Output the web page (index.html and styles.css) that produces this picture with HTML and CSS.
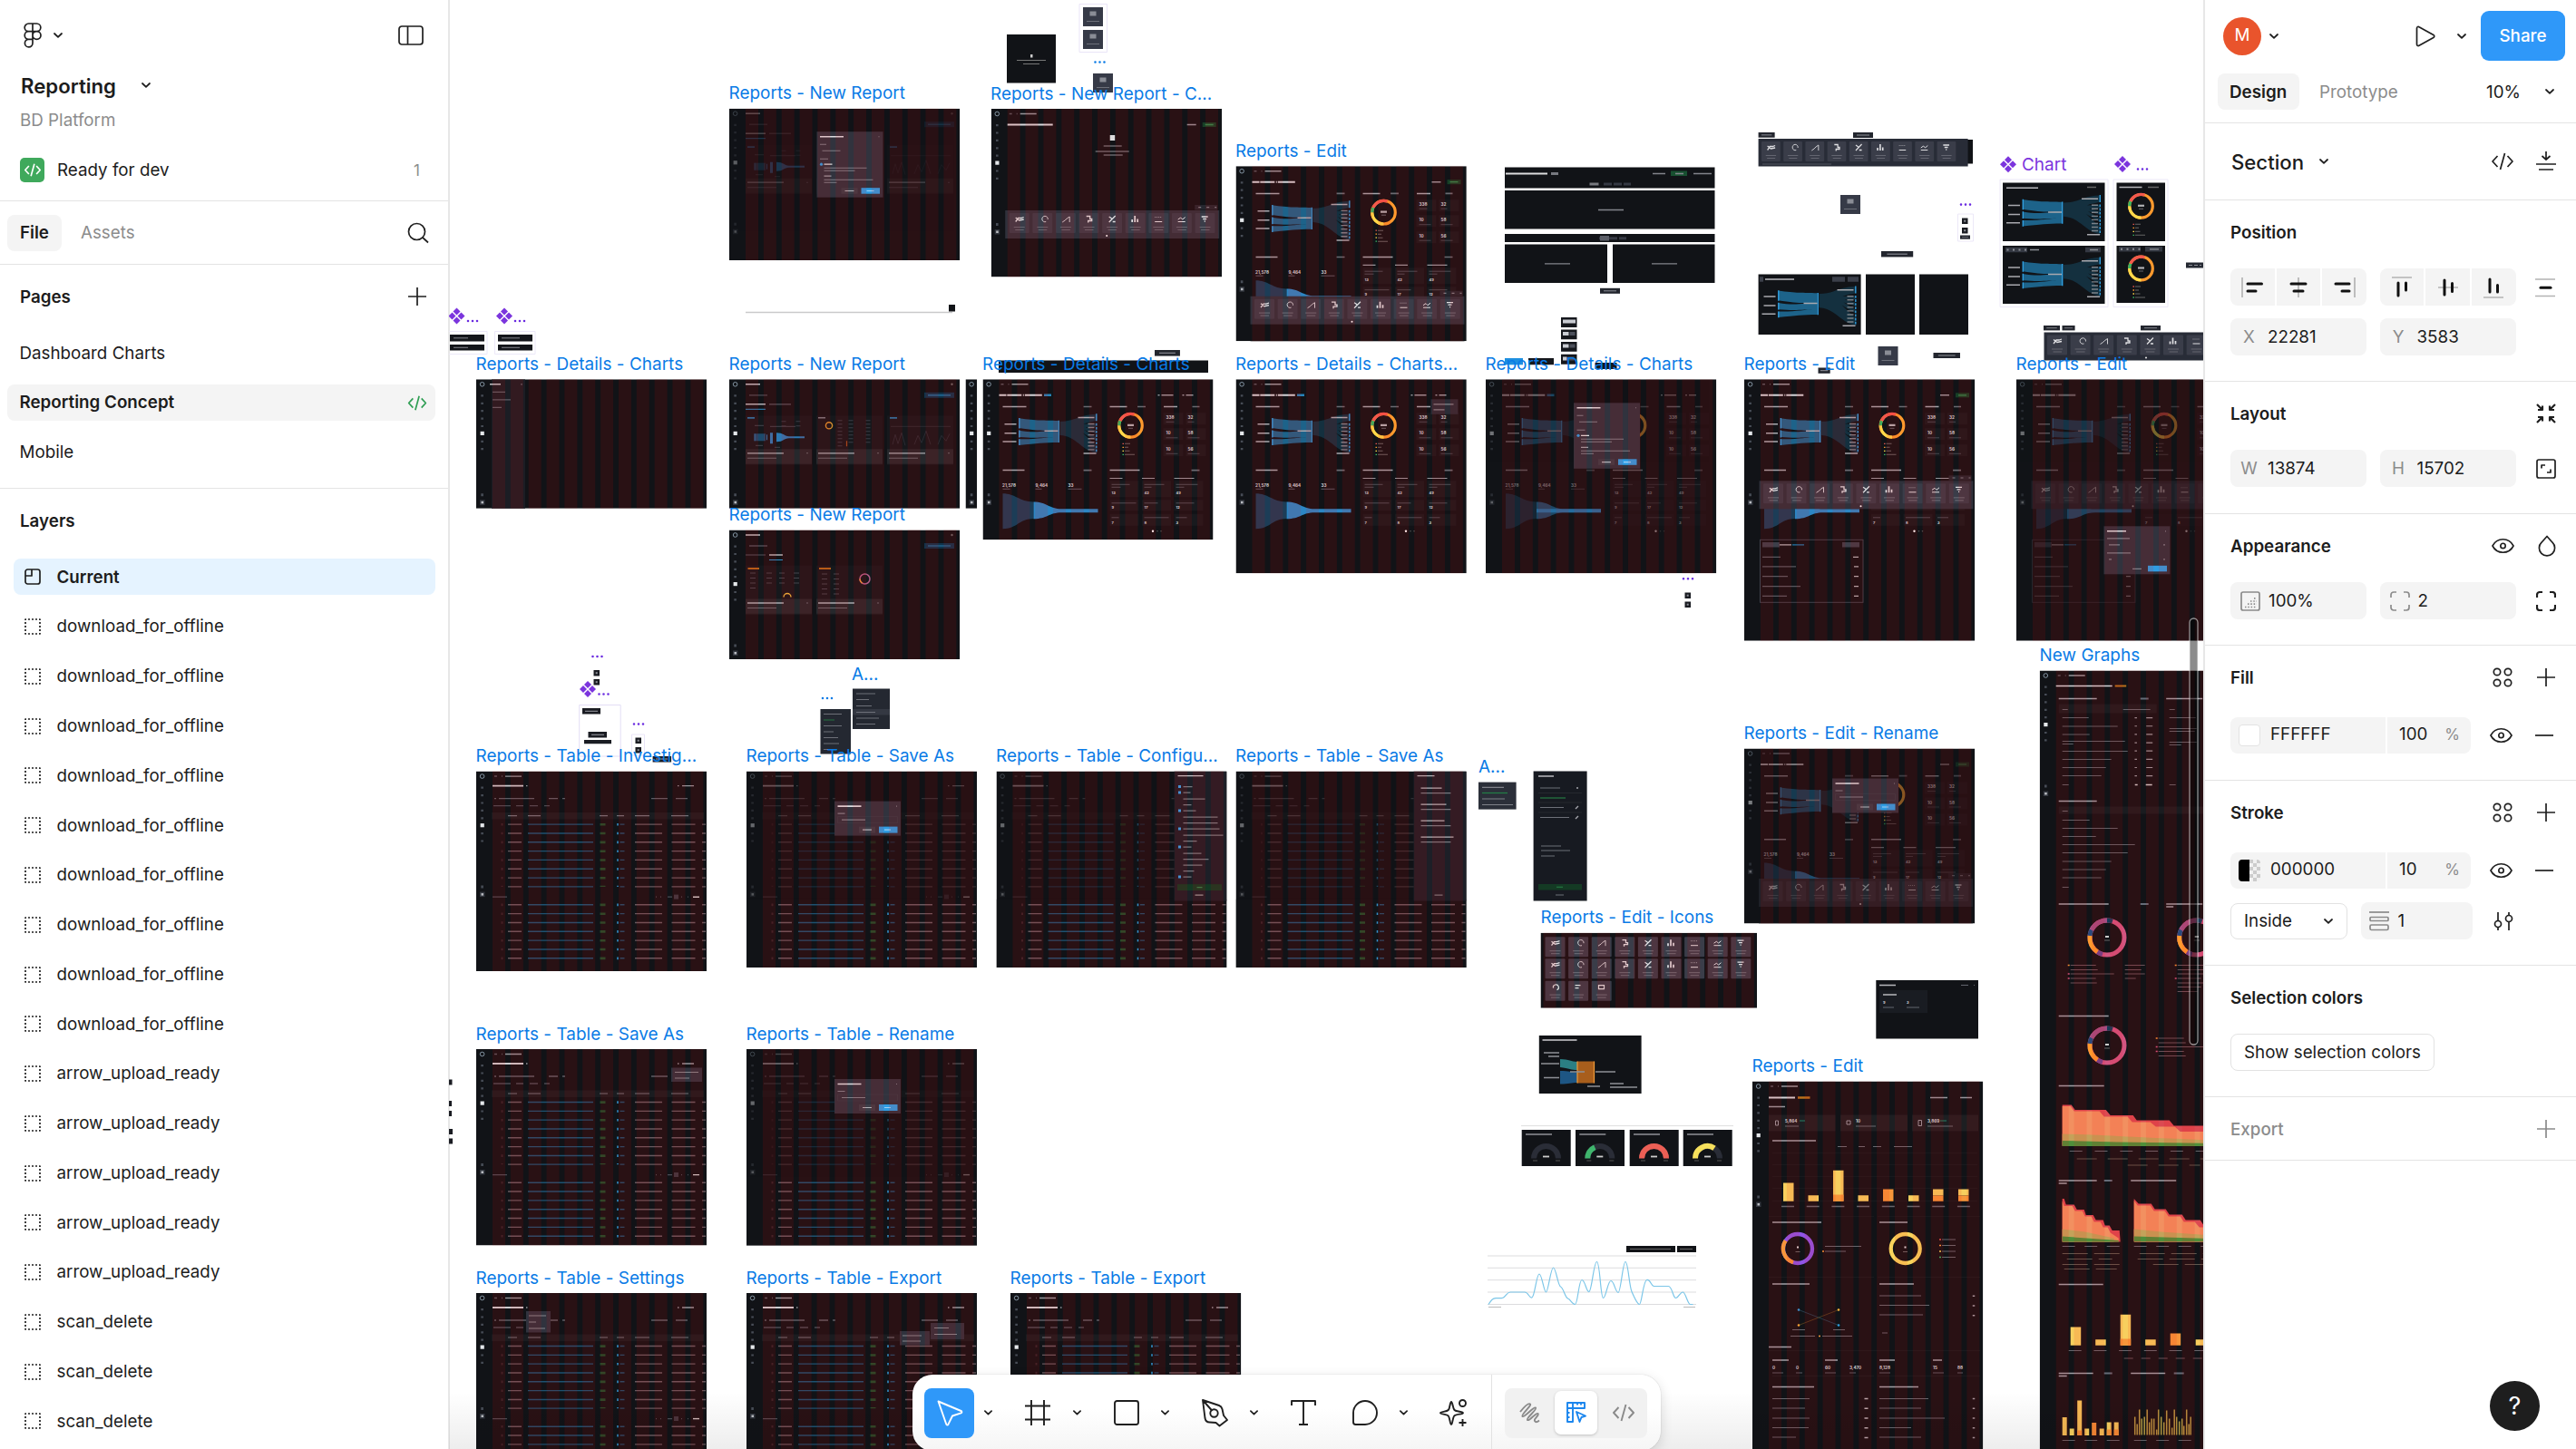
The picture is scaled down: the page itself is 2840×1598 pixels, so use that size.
FILE: index.html
```html
<!DOCTYPE html>
<html lang="en">
<head>
<meta charset="utf-8">
<title>Reporting</title>
<link rel="stylesheet" href="styles.css">
</head>
<body>
<svg class="sprite" aria-hidden="true">
  <defs>
    <symbol id="i-chev" viewBox="0 0 10 6"><path d="M1 1l4 3.800L9 1"/></symbol>
    <symbol id="i-figma" viewBox="0 0 20 28"><path d="M10 1H5.500a4.300 4.300 0 0 0 0 8.700H10zM10 1h4.500a4.300 4.300 0 0 1 0 8.700H10zM10 9.700H5.500a4.300 4.300 0 0 0 0 8.600H10zM10 14a4.500 4.300 0 1 1 9 0a4.500 4.300 0 1 1-9 0zM10 18.300H5.500a4.300 4.300 0 1 0 4.500 4.300z"/></symbol>
    <symbol id="i-panel" viewBox="0 0 28 22"><rect x="1" y="1" width="26" height="20" rx="3"/><path d="M10.500 1v20"/></symbol>
    <symbol id="i-search" viewBox="0 0 24 24"><circle cx="10.500" cy="10.500" r="9"/><path d="M17 17l6 5.500"/></symbol>
    <symbol id="i-plus" viewBox="0 0 22 22"><path d="M11 1v20M1 11h20"/></symbol>
    <symbol id="i-minus" viewBox="0 0 22 22"><path d="M1 11h20"/></symbol>
    <symbol id="i-code" viewBox="0 0 24 20"><path d="M6.500 4L1 10l5.500 6M17.500 4L23 10l-5.500 6M14.500 1l-5 18"/></symbol>
    <symbol id="i-section" viewBox="0 0 18 18"><rect x="1" y="1" width="16" height="16" rx="2.500"/><path d="M1 8h7V1"/></symbol>
    <symbol id="i-group" viewBox="0 0 18 18"><path stroke-dasharray="2 2" stroke-dashoffset="1" d="M1 1h16v16H1z"/></symbol>
    <symbol id="i-play" viewBox="0 0 22 24"><path d="M1.500 3.200v17.600c0 1.500 1.300 2.200 2.500 1.500L19.800 13.600c1.300-.8 1.300-2.400 0-3.200L4 1.700c-1.200-.7-2.500 0-2.500 1.500z"/></symbol>
    <symbol id="i-import" viewBox="0 0 22 22"><path d="M11 0v8.500M6.500 5L11 9l4.500-4M0 14h22M3 20h16"/></symbol>
    <symbol id="i-al" viewBox="0 0 24 24"><path class="faint" d="M1 1v22"/><path class="thick" d="M7 8h15.500M7 16h9"/></symbol>
    <symbol id="i-ac" viewBox="0 0 24 24"><path class="faint" d="M12 1v22"/><path class="thick" d="M4 8h16M7 16h10"/></symbol>
    <symbol id="i-ar" viewBox="0 0 24 24"><path class="faint" d="M23 1v22"/><path class="thick" d="M2 8h15M9 16h8"/></symbol>
    <symbol id="i-at" viewBox="0 0 24 24"><path class="faint" d="M1 1h22"/><path class="thick" d="M8 7v14M16.500 7v8"/></symbol>
    <symbol id="i-am" viewBox="0 0 24 24"><path class="faint" d="M1 12h22"/><path class="thick" d="M8 4v16M16.500 7.500v9"/></symbol>
    <symbol id="i-ab" viewBox="0 0 24 24"><path class="faint" d="M1 23h22"/><path class="thick" d="M8 3v14M16.500 9.500v7.500"/></symbol>
    <symbol id="i-tidy" viewBox="0 0 24 24"><path class="faint" d="M1 3h22M1 21.500h22"/><path class="thick" d="M7 12.300h11"/></symbol>
    <symbol id="i-shrink" viewBox="0 0 22 22"><path d="M1 1l6 6M7 2.500V7H2M21 1l-6 6M15 2.500V7h5M1 21l6-6M7 19.500V15H2M21 21l-6-6M15 19.500V15h5"/></symbol>
    <symbol id="i-resize" viewBox="0 0 22 22"><rect x="1" y="1" width="20" height="20" rx="2"/><path d="M6 10.500V7h4M16 11.500V15h-4"/></symbol>
    <symbol id="i-eye" viewBox="0 0 26 18"><path d="M1 9c2.500-4.800 7-7.500 12-7.500S22.500 4.200 25 9c-2.500 4.800-7 7.500-12 7.500S3.500 13.800 1 9z"/><circle cx="13" cy="9" r="2.800"/></symbol>
    <symbol id="i-drop" viewBox="0 0 20 24"><path d="M10 1.500l6 6.700a8.600 8.600 0 1 1-12 0z"/></symbol>
    <symbol id="i-corners" viewBox="0 0 22 22"><path d="M1 7V4a3 3 0 0 1 3-3h3M15 1h3a3 3 0 0 1 3 3v3M21 15v3a3 3 0 0 1-3 3h-3M7 21H4a3 3 0 0 1-3-3v-3"/></symbol>
    <symbol id="i-opacity" viewBox="0 0 22 22"><rect x="1" y="1" width="20" height="20" rx="2"/><path stroke-dasharray="1.500 1.800" d="M5 17.500h13M8 14.200h10M11 11h7M15 7.800h3"/></symbol>
    <symbol id="i-styles" viewBox="0 0 22 22"><circle cx="5" cy="5" r="3.700"/><circle cx="17" cy="5" r="3.700"/><circle cx="5" cy="17" r="3.700"/><circle cx="17" cy="17" r="3.700"/></symbol>
    <symbol id="i-weight" viewBox="0 0 22 22"><path d="M0 1h22"/><rect x="1" y="6.500" width="20" height="4" rx="1"/><rect x="1" y="15" width="20" height="5.500" rx="1.500"/></symbol>
    <symbol id="i-sliders" viewBox="0 0 22 22"><circle cx="5" cy="14" r="3.500"/><circle cx="17" cy="8" r="3.500"/><path d="M5 1v9.500M5 17.500V21M17 1v3.500M17 11.500V21"/></symbol>
    <symbol id="i-move" viewBox="0 0 30 30"><path d="M2.500 2.500l25 10.500c1.200.5 1.200 1.800 0 2.300L18 18.500l-4.500 9.200c-.6 1.100-1.900 1-2.300-.2z"/></symbol>
    <symbol id="i-frame" viewBox="0 0 28 28"><path d="M7 0v28M21 0v28M0 6.500h28M0 21.500h28"/></symbol>
    <symbol id="i-rect" viewBox="0 0 28 28"><rect x="1" y="1" width="26" height="26" rx="2.500"/></symbol>
    <symbol id="i-pen" viewBox="0 0 30 31"><path d="M2 1l18 6c2 .7 3 2 3.500 4l1.500 7 4 5-8.500 6.500-4-3.500-7-.5c-3 0-4.500-2-5-4.500zM2 1l10.500 12"/><circle cx="14.500" cy="15.500" r="4.200"/></symbol>
    <symbol id="i-text" viewBox="0 0 28 28"><path d="M1 6V1h26v5M14 1v26M9 27h10"/></symbol>
    <symbol id="i-bubble" viewBox="0 0 28 28"><path d="M14 1a13 13 0 0 1 0 26H3.500A2.500 2.500 0 0 1 1 24.500V14A13 13 0 0 1 14 1z"/></symbol>
    <symbol id="i-spark" viewBox="0 0 30 30"><path d="M13 3c1.500 0 1.600 7 3.500 9s9.500 1.600 9.500 3.200-8 1.200-9.800 3.300S14.500 28 13 28s-1.400-7.400-3.200-9.500S1 16.700 1 15.200s6.900-1.200 8.800-3.200S11.500 3 13 3zM25.500 22v8M21.500 26h8"/><circle cx="25.500" cy="4.500" r="3.500"/></symbol>
    <symbol id="i-draw" viewBox="0 0 24 24"><path d="M2 11C7 5 11 1 13 2.500S2.500 14 4.500 16 17 4.500 19 6.500 8 18 10 20s9.500-9 11.500-7-5 5.500-3.500 8 3.500.5 5-.5"/></symbol>
    <symbol id="i-design" viewBox="0 0 24 24"><path d="M2 1h19v6H8v15H2zM8 7V1M13 1v2.500M17 1v2.500M2 7h6M2 12h2.500M2 17h2.500M12 11l10 4.500-4.500 1.500-2 5z"/></symbol>
  </defs>
</svg>

<aside class="left">
  <header class="file-head">
    <div class="row app-row">
      <svg class="ic" width="20" height="28"><use href="#i-figma"/></svg>
      <svg class="ic chev" width="10" height="6"><use href="#i-chev"/></svg>
      <svg class="ic end" width="28" height="22"><use href="#i-panel"/></svg>
    </div>
    <div class="row title-row"><h1>Reporting</h1><svg class="ic chev" width="10" height="6"><use href="#i-chev"/></svg></div>
    <div class="row sub-row"><span>BD Platform</span></div>
    <div class="row dev-row">
      <span class="dev-badge"><svg class="ic" width="20" height="15"><use href="#i-code"/></svg></span>
      <span>Ready for dev</span><span class="count end">1</span>
    </div>
  </header>
  <nav class="tabs">
    <span class="pill">File</span><span class="muted">Assets</span>
    <svg class="ic end" width="24" height="24"><use href="#i-search"/></svg>
  </nav>
  <section class="pages">
    <div class="list-head"><h2>Pages</h2><svg class="ic end" width="22" height="22"><use href="#i-plus"/></svg></div>
    <div class="page"><span>Dashboard Charts</span></div>
    <div class="page current"><span>Reporting Concept</span><svg class="ic end" width="22" height="17"><use href="#i-code"/></svg></div>
    <div class="page"><span>Mobile</span></div>
  </section>
  <section class="layers">
    <div class="list-head"><h2>Layers</h2></div>
    <div class="layer selected"><svg class="ic" width="18" height="18"><use href="#i-section"/></svg><span>Current</span></div>
    <div class="layer"><svg class="ic" width="18" height="18"><use href="#i-group"/></svg><span>download_for_offline</span></div>
    <div class="layer"><svg class="ic" width="18" height="18"><use href="#i-group"/></svg><span>download_for_offline</span></div>
    <div class="layer"><svg class="ic" width="18" height="18"><use href="#i-group"/></svg><span>download_for_offline</span></div>
    <div class="layer"><svg class="ic" width="18" height="18"><use href="#i-group"/></svg><span>download_for_offline</span></div>
    <div class="layer"><svg class="ic" width="18" height="18"><use href="#i-group"/></svg><span>download_for_offline</span></div>
    <div class="layer"><svg class="ic" width="18" height="18"><use href="#i-group"/></svg><span>download_for_offline</span></div>
    <div class="layer"><svg class="ic" width="18" height="18"><use href="#i-group"/></svg><span>download_for_offline</span></div>
    <div class="layer"><svg class="ic" width="18" height="18"><use href="#i-group"/></svg><span>download_for_offline</span></div>
    <div class="layer"><svg class="ic" width="18" height="18"><use href="#i-group"/></svg><span>download_for_offline</span></div>
    <div class="layer"><svg class="ic" width="18" height="18"><use href="#i-group"/></svg><span>arrow_upload_ready</span></div>
    <div class="layer"><svg class="ic" width="18" height="18"><use href="#i-group"/></svg><span>arrow_upload_ready</span></div>
    <div class="layer"><svg class="ic" width="18" height="18"><use href="#i-group"/></svg><span>arrow_upload_ready</span></div>
    <div class="layer"><svg class="ic" width="18" height="18"><use href="#i-group"/></svg><span>arrow_upload_ready</span></div>
    <div class="layer"><svg class="ic" width="18" height="18"><use href="#i-group"/></svg><span>arrow_upload_ready</span></div>
    <div class="layer"><svg class="ic" width="18" height="18"><use href="#i-group"/></svg><span>scan_delete</span></div>
    <div class="layer"><svg class="ic" width="18" height="18"><use href="#i-group"/></svg><span>scan_delete</span></div>
    <div class="layer"><svg class="ic" width="18" height="18"><use href="#i-group"/></svg><span>scan_delete</span></div>
  </section>
</aside>

<main class="canvas">
<svg class="board" width="1935" height="1598" viewBox="495 0 1935 1598">
  <defs>
    <!-- twelve-column layout grid -->
    <path id="grid" class="gridcols" d="M18 0H251"/>
    <!-- app side navigation -->
    <g id="nav">
      <circle cx="6.600" cy="5.500" r="2.300" fill="none" stroke="#9fb4c4" stroke-width=".8"/>
      <path d="M6.600 17v62" stroke="#474c56" stroke-width="2.600" stroke-dasharray="2.200 6.200"/>
      <path d="M6.600 126v3" stroke="#474c56" stroke-width="2.600"/>
      <rect x="4.600" y="57.500" width="4.200" height="4.200" fill="#e4e7ea"/>
      <rect x="4" y="133" width="5.500" height="5.500" fill="#33373f"/><rect x="5.500" y="134.500" width="2.500" height="2.500" fill="#b9bcc1"/>
    </g>
    <g id="sankey">
      <path fill="#1d638a" d="M0 0c20 3 27 2 43 2.800v10.500c-16 .5-23 .8-43-2.500zM0 13.500c20 3.500 27 0 43-.2v7.500c-16 0-23 1.500-43 0zM0 23c20 .5 27-2.200 43-2.200v5.800c-16 0-23 1-43 3z"/>
      <path fill="#14303f" d="M45 3.500c18 0 20-7.500 40-8v7.500c0 0-12 2-14 3.500l14-1v4l-12 .5 12 3v4l-13-4 13 8v4l-15-9 15 14v8c-16-2-22-18.500-40-19.200z"/>
      <path stroke="#2f9fe0" stroke-width="1.400" d="M.3-.3v11.500M.3 13.300v7.800M.3 23v6.800M43.700 2.500v24.300"/>
      <path stroke="#2f9fe0" stroke-width="1.400" d="M85.300-5v8"/><path stroke="#2f9fe0" stroke-width="1.400" stroke-dasharray="2.800 1.300" d="M85.300 5.500v33"/>
      <path stroke="#a9a9af" stroke-width="1.500" d="M-16 6.500h13M-16 16.500h13M-18 25.800h15M28 14h15M65-.8h18M71 38.800h14"/>
      <path stroke="#7c8289" stroke-width="7" stroke-dasharray="1.400 2.650" d="M79.500 5.500v31"/>
    </g>
    <g id="donut" fill="none" stroke-width="3.200">
      <circle r="12.800" stroke="#ff9a2e"/>
      <path stroke="#ffd94a" d="M0 12.800A12.800 12.800 0 0 1-12.800 0"/>
      <path stroke="#37b562" d="M-12.800 0a12.800 12.800 0 0 1 1.200-5.300"/>
      <path stroke="#f2584d" d="M-11.600-5.300A12.800 12.800 0 0 1 4-12.200"/>
      <path stroke="#b0b0b4" stroke-width="2.200" d="M-3.500-.5h7"/><path stroke="#66676e" stroke-width="1" d="M-2.500 3h5"/>
      <path stroke="#e5554e" stroke-width="1.300" d="M-9 20h1.500"/><path stroke="#ff9a2e" stroke-width="1.300" d="M-9 24h1.500"/><path stroke="#ffd94a" stroke-width="1.300" d="M-9 28h1.500"/><path stroke="#37b562" stroke-width="1.300" d="M-9 32h1.500"/>
      <path stroke="#666" stroke-width="1.100" d="M-6.500 20h6M-6.500 24h4M-6.500 28h5.500M-6.500 32h11"/>
    </g>
    <g id="crumbs">
      <path stroke="#55565d" stroke-width="1.500" d="M20 5.500h3M28 5.500h1"/><path stroke="#96969b" stroke-width="1.400" d="M32 5.500h18"/>
    </g>
    <!-- dashboard: sankey, donut, stats, funnel -->
    <g id="dash">
      <use href="#crumbs"/>
      <path stroke="#d2d2d6" stroke-width="2" stroke-dasharray="8 .8 16 1.500 1 1 19 4" d="M18 17.500h48"/>
      <path stroke="#a4a4aa" stroke-width="1.500" d="M22 30.200h26M140 30.200h19M199.500 30.200h15M22 100.300h24M140 100.300h33"/>
      <path stroke="#6a6b72" stroke-width="1.700" d="M111 30.200h9M170.500 30.200h9M231 30.200h8M111 100.300h9M230 100.300h9"/>
      <use href="#sankey" x="40" y="43"/>
      <use href="#donut" x="163" y="51"/>
      <path fill="#ffffff08" d="M199 37h22v13h-22zM224 37h22v13h-22zM199 54h22v13h-22zM224 54h22v13h-22zM199 72h22v13h-22zM224 72h22v13h-22z"/>
      <g class="num"><text x="202" y="43.500">338</text><text x="226" y="43.500">32</text><text x="202" y="61">10</text><text x="226" y="61">58</text><text x="202" y="78.500">10</text><text x="226" y="78.500">56</text></g>
      <path stroke="#45464d" stroke-width="1" d="M202 47h9M226 47h7M202 64.500h13M226 64.500h13M202 82h13M226 82h13"/>
      <g class="num"><text x="21.500" y="118.500">21,578</text><text x="58" y="118.500">9,464</text><text x="94" y="118.500">33</text></g>
      <path stroke="#5a5b64" stroke-width="1" d="M22 121h8M58 121h7M94 121h15"/>
      <path fill="#1c3d57" d="M22 126c14 0 18 9 34 9.200v18.600c-16 0-18 11.200-34 11.200z"/>
      <path fill="#2c86c4" d="M56 135.200c15 0 17 7.800 31 7.800h40v4H87c-14 0-16 7-31 7z"/>
      <path stroke="#96969c" stroke-width="1.200" d="M140 109.200h14M175.500 109.200h14M211 109.200h22"/>
      <path fill="#ffffff08" d="M140 112h32v18h-32zM175.500 112h32v18h-32zM211 112h32v18h-32zM140 133h32v12h-32zM175.500 133h32v12h-32zM211 133h32v12h-32zM140 148.500h32v13h-32zM175.500 148.500h32v13h-32zM211 148.500h32v13h-32z"/>
      <path stroke="#4e4f56" stroke-width="1" d="M142 116h20M142 119h10M178 116h22M178 119h8M213 116h24M213 119h9M142 136.500h27M178 136.500h15M213 136.500h20M142 152.500h8M178 152.500h27M213 152.500h12"/>
      <g class="num small"><text x="142" y="126.500">13</text><text x="178" y="126.500">42</text><text x="213" y="126.500">49</text><text x="142" y="143">9</text><text x="178" y="143">17</text><text x="213" y="143">12</text><text x="142" y="159.500">7</text><text x="178" y="159.500">8</text><text x="213" y="159.500">3</text></g>
      <circle cx="187.500" cy="167.500" r="1.200" fill="#fff"/><circle cx="192.500" cy="167.500" r=".8" fill="#555"/><circle cx="196.500" cy="167.500" r=".8" fill="#555"/>
    </g>
    <g id="view-actions"><path stroke="#2683ba" stroke-width="2.600" d="M67.500 17.500h8"/><path stroke="#94949a" stroke-width="1.500" d="M193 17.500h2M197 17.500h13M220 17.500h2M224 17.500h8"/></g>
    <g id="edit-actions"><path stroke="#94949a" stroke-width="1.500" d="M216 17.500h10"/><rect x="233" y="15" width="15" height="5" fill="#173f26"/><path stroke="#2f8a4f" stroke-width="1.300" d="M236 17.500h9"/></g>
    <!-- one chart tile -->
    <g id="tile"><rect width="22" height="22" rx="1" fill="#3a3d49"/><path stroke="#646670" stroke-width="1.200" d="M5 15.500h12M6.500 18.500h9.500"/></g>
    <g id="tileicons" fill="none" stroke="#e0e0e3" stroke-width="1.300">
      <path d="M7 9.500l3-4h3l3-1M7 5l4 3 5-1"/>
      <path d="M40.500 9.500a3.200 3.200 0 1 1 2-2.500" stroke-width=".9"/>
      <path d="M58.500 10l3-2 2-2 3-2v6" stroke-width=".9"/>
      <path d="M85 3.500h4v3h2v2h-4v2"/>
      <path d="M110 10l7-7M110 4l3 2M114 9.500h3"/>
      <path d="M135.500 10V7M138.500 10V3M141.500 10V6.500" stroke-width="1.700"/>
      <path d="M160.500 9.500h8" stroke-width="1"/><path d="M160.500 4.500h8" stroke-width=".6" stroke-dasharray="1 1"/>
      <path d="M186 9.500h8M186 7l3-2 2 2 3-2.500" stroke-width="1"/>
      <path d="M212 4h7M213.500 6.500h4M215 9h1.200"/>
    </g>
    <g id="tiles"><use href="#tile"/><use href="#tile" x="25.600"/><use href="#tile" x="51.200"/><use href="#tile" x="76.800"/><use href="#tile" x="102.400"/><use href="#tile" x="128"/><use href="#tile" x="153.600"/><use href="#tile" x="179.200"/><use href="#tile" x="204.800"/><use href="#tileicons"/></g>
    <g id="tray"><rect x="209" y="-6" width="25" height="5.500" fill="#25272f"/><path stroke="#7c7e85" stroke-width="1.200" stroke-dasharray="3 6" d="M213-3.300h20"/><rect width="236" height="31" fill="#2f313b"/><use href="#tiles" x="4.500" y="3"/><circle cx="112" cy="28" r="1" fill="#fff"/></g>
    <!-- report cards list -->
    <g id="list">
      <path stroke="#bcbcc1" stroke-width="1.600" d="M18 5.500h16"/><path stroke="#4b4c54" stroke-width="1.300" d="M22 17.500h20"/>
      <rect x="215" y="14.500" width="33" height="6" fill="#10334b"/><path stroke="#2679aa" stroke-width="1.200" d="M219 17.500h25"/>
      <circle cx="245.500" cy="5.500" r="1.200" fill="#666"/>
    </g>
    <g id="card"><path fill="#ffffff06" d="M0 0h73v53H0z"/><path fill="#ffffff12" d="M0 37h73v17H0z"/><path stroke="#a8a8ae" stroke-width="1.300" d="M2 41.500h40"/><path stroke="#66676e" stroke-width="1.100" d="M2 47h32M67 41.500h2"/></g>
    <g id="cards3">
      <path stroke="#b0b0b5" stroke-width="1.400" d="M18 27.500h22"/><path stroke="#54555c" stroke-width="1.200" d="M44 27.500h24"/><path stroke="#2f8fc8" stroke-width="1" d="M18 33h22"/>
      <use href="#card" x="18" y="40"/><use href="#card" x="96" y="40"/><use href="#card" x="174" y="40"/>
      <path fill="#1c4a6c" d="M28 60h12v8H28z"/><path fill="#2c79b4" d="M45 59h3v12h-3zM52 59c8 0 8 3.500 14 4h17v2H66c-6 0-6 4-14 4z"/><path stroke="#2c79b4" d="M28 60v8M41.500 61v6"/>
      <path stroke="#44454e" d="M28 51h10M45 52h28M29 73h8M50 75h6"/><path stroke="#3a3b44" stroke-width="5" stroke-dasharray="1 4" d="M60 46v10M76 46v10"/>
      <circle cx="110" cy="51" r="3.600" fill="none" stroke="#d88f2e" stroke-width="1.400"/>
      <path stroke="#3b3c45" stroke-width="5" stroke-dasharray="1 3" d="M122 45v32M134 45v26M153 45v26"/>
      <path stroke="#9e4d1d" stroke-width="1.200" d="M129.500 68v6"/>
      <path stroke="#2474a5" stroke-width="1.800" d="M20 42.500h8M177 42.500h8"/><path stroke="#77787f" stroke-width="1.500" d="M98 42.500h8"/>
      <path fill="none" stroke="#30313a" stroke-width=".8" d="M178 52h66M180 72l3-11 3 10 4-12 4 14M204 72l4-10 4 8 5-13 5 15M230 72l4-10 5 6 4-8"/>
    </g>
    <!-- investigations table -->
    <g id="table">
      <use href="#crumbs"/>
      <path stroke="#cbcbcf" stroke-width="1.800" d="M18 16h34"/><path stroke="#94949a" stroke-width="1.300" d="M222 16h1.500M227 16h13M55 16h1.500"/>
      <path stroke="#5c5d65" stroke-width="1.400" d="M20 30h2M25 30h39M193 30h18M220 30h13M80 30h10M95 30h3"/><path stroke="#4a4b53" stroke-width="1.300" d="M19 38h19M44 38h8M59 38h9M75 38h6"/>
      <path fill="#ffffff0a" d="M17 45.500h234v7.500H17z"/><path stroke="#6f7077" stroke-width="1.200" d="M35 49h10M57 49h14M136 49h9M155 49h8M175 49h16M215 49h19"/>
      <g id="rows" fill="none">
        <g stroke-dasharray="1.400 8.430">
          <path stroke="#67595f" stroke-width="15" d="M42.500 57.800v70M42.500 146.500v62"/>
          <path stroke="#1d5271" stroke-width="72" d="M93 57.800v70M93 146.500v62"/>
          <path stroke="#67595f" stroke-width="30" d="M190 57.800v70M190 146.500v62"/>
          <path stroke="#67595f" stroke-width="26" d="M228.500 57.800v70M228.500 146.500v62"/>
          <path stroke="#67595f" stroke-width="4" d="M251 57.800v70M251 146.500v62"/>
          <path stroke="#1f4d69" stroke-width="5" d="M161 57.800v70M161 146.500v62"/>
        </g>
        <g stroke-dasharray="2.600 7.230">
          <path stroke="#1d4f2c" stroke-width="6" d="M139.500 57.300v70M139.500 146v62"/>
          <path stroke="#338fc8" stroke-width="1.600" d="M156 57.300v70M156 146v62"/>
          <path stroke="#33252b" stroke-width="2" d="M28.500 57.300v70M28.500 146v62"/>
        </g>
      </g>
      <path stroke="#4b4c54" stroke-width="1.300" d="M18 138.600h16M198 138.600h1M203 138.600h1M211 138.600h5M226 138.600h1M233 138.600h1"/><rect x="218" y="136" width="5" height="5" fill="#393a43"/><path stroke="#ccc" stroke-width="1.400" d="M239 138.600h7"/>
    </g>
    <g id="modal-sm"><rect width="73" height="38" fill="#31333e"/><path stroke="#dcdce0" stroke-width="1.600" d="M3.500 5.500h26"/><path stroke="#7d7f88" stroke-width="1.200" d="M3.500 13.500h8M8 20.500h26M68 5.500h1"/><path fill="none" stroke="#3d3f4a" stroke-width=".6" d="M3.500 17h66v7h-66z"/><rect x="27" y="28" width="18" height="7" fill="#3c3e48"/><path stroke="#b0b1b7" stroke-width="1.200" d="M31 31.500h10"/><rect x="49" y="28" width="20.500" height="7" fill="#2f9de3"/><path stroke="#9fd2f5" stroke-width="1.200" d="M55 31.500h7"/></g>
    <g id="modal-lg"><rect width="73" height="72.500" fill="#31333e"/><path stroke="#dcdce0" stroke-width="1.600" d="M3.500 5.500h26"/><path stroke="#7d7f88" stroke-width="1.100" d="M3.500 14h7M6 21h20M3.500 30h9M68 5.500h1M8 40h47M8 43h34M8 53h54M8 56h14"/><path stroke="#ddd" stroke-width="1.200" d="M8 36h9"/><path stroke="#9c9ca4" stroke-width="1.200" d="M8 49h8"/><circle cx="5" cy="36" r="1.600" fill="#2f9de3"/><rect x="27" y="62" width="18" height="6.500" fill="#3c3e48"/><path stroke="#b0b1b7" stroke-width="1.200" d="M31 65.300h10"/><rect x="49" y="62" width="20.500" height="6.500" fill="#2f9de3"/><path stroke="#9fd2f5" stroke-width="1.200" d="M55 65.300h8"/></g>
    <g id="comp" fill="#7b35dd"><path d="M0-9l4 4-4 4-4-4zM0 9l4-4-4-4-4 4zM-9 0l4-4 4 4-4 4zM9 0L5-4 1 0l4 4z"/></g>
    <path id="dots" stroke-width="2.600" stroke-linecap="round" stroke-dasharray="0 5" d="M0 0h11"/>
    <g id="chip"><rect width="22" height="6" fill="#23262e"/><path stroke="#85878f" stroke-width="1.100" d="M4 3h14"/></g>
    <g id="boxicon"><rect width="22" height="21" fill="#363a47"/><rect x="7.500" y="4.500" width="7" height="5" fill="#8a8d96"/><path stroke="#6d707a" stroke-width="1" d="M4 15.500h14"/></g>
    <g id="dotbox"><rect width="6.500" height="6.500" fill="#1a1c22"/><rect x="2.200" y="2.200" width="2" height="2" fill="#8e9098"/></g>
    <g id="donut-lg" fill="none" stroke-width="5">
      <circle r="19" stroke="#d25581"/><path stroke="#a34f83" d="M-15.500-11A19 19 0 0 1 0-19"/><path stroke="#173a57" d="M0-19a19 19 0 0 1 6 .9"/><path stroke="#2b4a7c" d="M-19-2a19 19 0 0 1 1.900-6.500"/><path stroke="#a34f83" d="M-17.100-8.500l2-3"/><path stroke="#ff9a2e" d="M-10.500 15.800A19 19 0 0 1-19-2"/><path stroke="#6c4690" d="M-5 18.300a19 19 0 0 1-5.500-2.500"/>
      <path stroke="#ccc" stroke-width="2" d="M-2-1h4"/><path stroke="#666" stroke-width="1" d="M-3 3h6"/>
    </g>
    <linearGradient id="fade" x1="0" x2="0" y1="0" y2="1"><stop offset="0" stop-color="#000" stop-opacity="0"/><stop offset="1" stop-color="#000" stop-opacity=".07"/></linearGradient>
  </defs>

  <!-- loose pieces, top -->
  <rect x="1110" y="38" width="54" height="53.500" fill="#111317"/><rect x="1136" y="60" width="2.500" height="3.500" fill="#ccc"/><path stroke="#777" stroke-width="1.200" d="M1121 66.500h32M1128 70.500h18"/>
  <path fill="none" stroke="#e9e4f7" d="M1190 4.500h30.500v53H1190z"/>
  <use href="#boxicon" x="1194" y="8"/><use href="#boxicon" x="1194" y="33"/><use href="#dots" class="dots" x="1207.500" y="68.500"/><use href="#boxicon" x="1205" y="81"/>
  <path stroke="#c9c9cb" stroke-width="1.300" d="M822 344.500h228"/><rect x="1046" y="336" width="7" height="7.500" fill="#111317"/>
  <use href="#comp" x="503.500" y="348.500"/><use href="#dots" class="dots purple" x="516" y="354"/><use href="#comp" x="556" y="348.500"/><use href="#dots" class="dots purple" x="568" y="354"/>
  <path fill="#14161b" d="M496 369h38v7.500h-38zM496 380h38v6.500h-38zM549 369h38v7.500h-38zM549 380h38v6.500h-38z"/><path stroke="#84858c" d="M500 372.800h16M500 383.300h16M553 372.800h20M553 383.300h20"/><path fill="none" stroke="#ece8f8" d="M495 365.500h42v25h-42M545.500 365.500h44.500v25h-44.500z"/>
  <rect x="1101" y="397.500" width="231" height="13.500" fill="#111317"/><use href="#chip" transform="translate(1273 386) scale(1.270 1.100)"/>
  <path fill="#111317" d="M1659 184.500h231.500v23H1659zM1659 210h231.500v42.500H1659zM1659 258h231.500v9H1659zM1659 269.500h113V312h-113zM1778 269.500h112.500V312H1778z"/>
  <path stroke="#dcdcde" stroke-width="2" d="M1660 191.500h46"/><path stroke="#77797f" stroke-width="3" d="M1710 191.500h8M1752.500 203h10"/><path fill="#175030" d="M1842 188.500h18v5.500h-18z"/><path stroke="#83858c" stroke-width="1.300" d="M1822 191.500h14M1847 191.500h9M1867 191.500h20M1762 231.500h28M1703 290.800h28M1821 290.800h28"/><path stroke="#353943" stroke-width="3" stroke-dasharray="9 2" d="M1768 203h30M1763 262.700h30"/><rect x="1764" y="260" width="10" height="5.500" fill="#5b5e67"/>
  <use href="#chip" x="1764" y="317.800"/>
  <path fill="#15171c" d="M1721 350h17.500v11H1721zM1721 363.500h17.500v10.700H1721zM1721 377h17.500v10.700H1721zM1721 390.700h17.500v11H1721z"/><path fill="#c9ccd2" d="M1723 352.500h14v4h-14zM1723 366h6.500v4H1723zM1723 379.500h6.500v4H1723zM1723 393.500h4.500v4h-4.500z"/><path fill="#4c505b" d="M1730.500 366h6v4h-6zM1730.500 379.500h6v4h-6zM1728.500 393.500h7v4h-7z"/>
  <path fill="#1e8fe0" d="M1659 395h20v7.300h-20z"/><path fill="#15171c" d="M1685 395h28v7.300h-28zM1758.500 400h24v7h-24z"/>
  <use href="#dots" class="dots purple" x="1856" y="638.200"/><use href="#dotbox" x="1857.500" y="653.500"/><use href="#dotbox" x="1857.500" y="663.500"/>
  <use href="#chip" transform="translate(1938.600 146) scale(.82 .95)"/><use href="#chip" x="2043" y="146"/>
  <rect x="1960" y="154" width="215" height="26.500" fill="#101216"/><rect x="1938.600" y="153" width="231" height="30.500" fill="#282c37"/><use href="#tiles" transform="translate(1942 156) scale(.945 1)"/><path stroke="#50545f" stroke-width="1.200" d="M1943 181h76"/>
  <use href="#boxicon" x="2029" y="215"/><use href="#dots" class="dots purple" x="2162" y="225.600"/><path fill="none" stroke="#ece8f8" d="M2158.500 236h17v30h-17z"/><use href="#dotbox" x="2163" y="240.500"/><use href="#dotbox" x="2163" y="251"/><use href="#chip" transform="translate(2161 259.500) scale(.5 .7)"/>
  <use href="#chip" transform="translate(2074 277) scale(1.600 1.070)"/>
  <path fill="#111317" d="M1938.600 302.500h113v66.500h-113zM2057 302.500h54V369h-54zM2116 302.500h54V369h-54z"/><use href="#sankey" x="1960.500" y="320.500"/><path stroke="#b5b5ba" stroke-width="1.600" d="M1946 308h32"/><path stroke="#3b3f4a" stroke-width="5.500" d="M1940 308h4M2020 308h14M2037 308h12"/>
  <use href="#boxicon" x="2070.500" y="382"/><use href="#chip" transform="translate(2131.500 389) scale(1.340 1)"/><use href="#chip" transform="translate(2004.500 405.500) scale(.6 1.050)"/>
  <use href="#comp" x="2214" y="181.300"/><text class="label purple" x="2229" y="188">Chart</text><use href="#comp" x="2340" y="181"/><use href="#dots" class="dots purple" x="2357" y="186.500"/>
  <path fill="none" stroke="#ece8f8" d="M2205 198h119v140.500h-119zM2330 198h60v140.500h-60z"/>
  <path fill="#111317" d="M2208 201.500h112.500V266H2208zM2208 271h112.500v64H2208zM2333.500 201.500h53.500V266h-53.500zM2333.500 271h53.500v63h-53.500z"/>
  <use href="#sankey" x="2230" y="220"/><use href="#sankey" x="2230" y="288.500"/><use href="#donut" x="2360.500" y="227.300"/><use href="#donut" x="2360.500" y="296"/>
  <path stroke="#b8b8bc" stroke-width="1.500" d="M2212 207.200h35M2336.500 206.500h25"/><path stroke="#666" stroke-width="1.300" d="M2301 206.500h10M2368 206.500h12"/><path stroke="#343842" stroke-width="5.500" d="M2211 275.500h24M2299 275.500h17M2336 274.800h24M2365 274.800h19"/><path stroke="#8c8e95" stroke-width="1.300" d="M2238 275.500h10M2304 275.500h9M2370 274.800h10"/>
  <path stroke="#8c8e95" stroke-width="2" stroke-dasharray="2 4.500" d="M2212.500 275.500h22M2338 274.800h22"/>
  <rect x="2410" y="289.500" width="20" height="6" fill="#252932"/><path stroke="#8e9098" d="M2413 292.500h14" stroke-dasharray="4 2"/>
  <use href="#chip" transform="translate(2253 359) scale(.82 .9)"/><use href="#chip" transform="translate(2273.500 359) scale(.64 .9)"/><use href="#chip" transform="translate(2360 359) scale(1 .9)"/>
  <rect x="2253.500" y="366.500" width="180" height="31" fill="#282c37"/><use href="#tiles" x="2257" y="369.500"/><circle cx="2366" cy="394.500" r="1.100" fill="#ddd"/>

  <!-- frames, rows one and two -->
  <svg x="804" y="119.700" width="254.300" height="167.300"><rect class="bg" width="100%" height="100%"/><g opacity=".35"><use href="#nav"/><use href="#list"/><use href="#cards3"/></g><use href="#modal-lg" x="96.500" y="25.500"/><use href="#grid"/></svg>
  <svg x="1092.700" y="120" width="254.300" height="185.400"><rect class="bg" width="100%" height="100%"/><use href="#nav"/><use href="#crumbs"/><use href="#edit-actions"/><path stroke="#d8d8dc" stroke-width="1.800" d="M18 17.500h50"/><rect x="131" y="29" width="5.500" height="6" fill="#dcdcde"/><path stroke="#8f8f95" stroke-width="1.200" d="M124 41h20M115 47h37M124 51h21"/><use href="#tray" x="15.500" y="112"/><use href="#grid"/></svg>
  <svg x="1362.500" y="183.200" width="254.300" height="193"><rect class="bg" width="100%" height="100%"/><use href="#nav"/><use href="#dash"/><use href="#edit-actions"/><rect x="16" y="165" width="236" height="30" fill="#111317"/><use href="#tray" x="16" y="143.500"/><use href="#grid"/></svg>
  <svg x="525" y="418.300" width="254" height="142.500"><rect class="bg" width="100%" height="100%"/><use href="#nav"/><rect x="17" width="37" height="143" fill="#1b1d24"/><path stroke="#c0c0c4" stroke-width="1.500" d="M15 5.500h12"/><path stroke="#5c5d65" stroke-width="1.300" d="M49 5.500h2M18 14h14M18 22.500h20M18 31h10"/><use href="#grid"/></svg>
  <svg x="804" y="418.300" width="254.300" height="142.500"><rect class="bg" width="100%" height="100%"/><use href="#nav"/><use href="#list"/><use href="#cards3"/><use href="#grid"/></svg>
  <svg x="1064.500" y="418.300" width="12.700" height="142.500"><rect class="bg" width="100%" height="100%"/><use href="#nav"/></svg>
  <svg x="804" y="584.500" width="254.300" height="142.500"><rect class="bg" width="100%" height="100%"/><use href="#nav"/><use href="#list"/>
    <path stroke="#54555c" stroke-width="1.200" d="M18 27.500h22"/><path stroke="#b0b0b5" stroke-width="1.400" d="M44 27.500h15"/><path stroke="#2f8fc8" stroke-width="1" d="M44 33h15"/><use href="#card" x="18" y="39"/><use href="#card" x="96" y="39"/>
    <path stroke="#b2661a" stroke-width="2" d="M20.500 42.500h12.500M99 42.500h13"/><path fill="none" stroke="#e8b63f" stroke-width="1.400" d="M60 74a4 4 0 0 1 8 0"/><circle cx="149.500" cy="54" r="5.500" fill="none" stroke="#b05b86" stroke-width="1.500"/><path fill="none" stroke="#e8992f" stroke-width="1.500" d="M144 54a5.500 5.500 0 0 0 2.500 4.600"/>
    <path stroke="#44454d" stroke-width="6" stroke-dasharray="1 4.500" d="M26 47v20M44 47v16M58 47v14M74 47v16M105 48v24M118 48v24"/><use href="#grid"/></svg>
  <svg x="1083.500" y="418.300" width="254" height="177"><rect class="bg" width="100%" height="100%"/><use href="#nav"/><use href="#dash"/><use href="#view-actions"/><use href="#grid"/></svg>
  <svg x="1362.500" y="418.300" width="254.300" height="214"><rect class="bg" width="100%" height="100%"/><use href="#nav"/><use href="#dash"/><use href="#view-actions"/><rect x="215" y="22" width="30" height="16.500" fill="#2b2d37"/><path stroke="#83858c" stroke-width="1.200" d="M218 27.500h22M218 33.500h12"/><use href="#grid"/></svg>
  <svg x="1638" y="418.300" width="254.300" height="214"><rect class="bg" width="100%" height="100%"/><g opacity=".45"><use href="#nav"/><use href="#dash"/><use href="#view-actions"/></g><path fill="#2c86c4" opacity=".6" d="M56 143h71v4H56z"/><use href="#modal-lg" x="97" y="26"/><use href="#grid"/></svg>
  <svg x="1923" y="418.300" width="254.300" height="288.400"><rect class="bg" width="100%" height="100%"/><use href="#nav"/><use href="#dash"/><use href="#edit-actions"/><use href="#tray" x="16.500" y="112"/>
    <g id="tbl5"><rect x="17.500" y="177" width="113.500" height="69" fill="none" stroke="#42434d"/><path stroke="#3d3f4a" stroke-width="5.500" d="M20 182.500h19M108 182.500h19"/><path stroke="#b0b0b4" stroke-width="1.300" d="M39 182.500h13M120 196h6M121 206.500h5M121 217.300h5M121 228.300h5M121 239h5"/><path stroke="#2577a8" stroke-width="1.300" d="M53 182.500h13"/><path stroke="#57585f" stroke-width="1.200" d="M20 196h20M20 206.500h37M20 217.300h28M20 228.300h42M20 239h27"/></g>
    <use href="#grid"/></svg>
  <svg x="2223" y="418.300" width="254.300" height="288.400"><rect class="bg" width="100%" height="100%"/><g opacity=".42"><use href="#nav"/><use href="#dash"/><use href="#tray" x="16.500" y="112"/><use href="#tbl5"/></g><rect x="96.500" y="162" width="73" height="53" fill="#31333e"/><path stroke="#dcdce0" stroke-width="1.600" d="M100 167.500h21"/><path stroke="#7d7f88" stroke-width="1.200" d="M100 175.500h25M102 182.500h12M100 191.500h26M102 198.500h3M162 182.500h2M162 198.500h2M164 167.500h1M128 209h10"/><rect x="145" y="205.500" width="21" height="6.500" fill="#2f9de3"/><use href="#grid"/></svg>

  <!-- loose pieces, middle -->
  <use href="#dots" class="dots purple" x="653.500" y="724"/><use href="#dotbox" x="654.500" y="739"/><use href="#dotbox" x="654.500" y="749"/><use href="#comp" x="648" y="760"/><use href="#dots" class="dots purple" x="660.500" y="765.500"/>
  <path fill="none" stroke="#e3def5" d="M638.700 777.500h45.500V834h-45.500z"/><path fill="#1a1c22" d="M642 781h20v6.500h-20zM648.500 807h20.500v6.500h-20.500zM644 816h30v4.300h-30zM719.600 834h20.500v6.500h-20.500z"/><path stroke="#999ba3" d="M645 784.300h14M652 810.300h14M723 837h13"/>
  <use href="#dots" class="dots purple" x="699" y="798.500"/><path fill="none" stroke="#e9e4f7" d="M696.500 810h14v23h-14z"/><use href="#dotbox" x="700.500" y="813.500"/><use href="#dotbox" x="700.500" y="824"/>
  <use href="#dots" class="dots" x="907" y="770"/><rect x="904.500" y="782" width="33.500" height="49.500" fill="#242831"/><path stroke="#6d7078" stroke-width="1.200" d="M908 787.500h20M908 800.500h20M908 807h11M908 813.500h16M908 820h17M908 826.500h15"/><path stroke="#26693f" stroke-width="1.200" d="M908 794h12"/>
  <rect x="940" y="759.500" width="41" height="44.500" fill="#242831"/><path fill="#343842" d="M940 782h41v6.500h-41z"/><path stroke="#6d7078" stroke-width="1.200" d="M944 765h21M944 771.500h14M944 778.500h17M944 785.500h21M944 792h25M944 798.500h21"/>
  <path fill="#1a1c22" d="M495 1190.500h3.500v6H495zM495 1214h3v6h-3zM495 1225h3v6h-3zM495 1245h4v6h-4zM495 1255.500h4v6h-4z"/>

  <!-- table frames -->
  <svg x="525" y="850.600" width="254" height="220.500"><rect class="bg" width="100%" height="100%"/><use href="#nav"/><use href="#table"/><use href="#grid"/></svg>
  <svg x="823" y="850.600" width="254" height="216.500"><rect class="bg" width="100%" height="100%"/><g opacity=".4"><use href="#nav"/><use href="#table"/></g><svg y="141" width="254" height="80"><rect class="bg" width="254" height="80"/><use href="#table" y="-141"/></svg><use href="#modal-sm" x="97" y="33"/><use href="#grid"/></svg>
  <svg x="1098.500" y="850.600" width="254" height="216.500"><rect class="bg" width="100%" height="100%"/><g opacity=".4"><use href="#nav"/><use href="#table"/></g><svg y="141" width="254" height="80"><rect class="bg" width="254" height="80"/><use href="#table" y="-141"/></svg>
    <rect x="196" width="58" height="143" fill="#1d1f27"/><path stroke="#c6c6ca" stroke-width="1.400" d="M200 5h28"/><path stroke="#77787f" stroke-width="1.200" d="M206 17h10M206 23.500h8M206 30.500h24M206 37h9M206 43.500h14M206 50.500h38M206 57h38M206 63.500h40M206 70.500h44M206 77h15M206 83.500h9M206 90.500h20M206 97h28M206 103.500h21M206 110h12M206 116.500h9"/><path stroke="#31a2ea" stroke-width="3" d="M202 15.500v3M202 22v3M202 42v3M202 62v3M202 82v3M202 115v3"/><rect x="199.500" y="124.500" width="49" height="7" fill="#143a24"/><path stroke="#2f8049" stroke-width="1.200" d="M221 128h6"/><path stroke="#999" stroke-width="1.200" d="M219 136.500h9"/><use href="#grid"/></svg>
  <svg x="1362.500" y="850.600" width="254.300" height="216.500"><rect class="bg" width="100%" height="100%"/><g opacity=".4"><use href="#nav"/><use href="#table"/></g><svg y="141" width="254" height="80"><rect class="bg" width="254" height="80"/><use href="#table" y="-141"/></svg>
    <rect x="196" width="58" height="143" fill="#1d1f27"/><path stroke="#b4b4b9" stroke-width="1.400" d="M200 5h19M204 18.500h23M204 36.500h28M204 54.500h26M204 72.500h36"/><path stroke="#77787f" stroke-width="1.200" d="M204 24h33M204 42h33M204 60h33M204 78h33M219 136.500h9"/><use href="#grid"/></svg>
  <svg x="525" y="1157" width="254" height="216.500"><rect class="bg" width="100%" height="100%"/><use href="#nav"/><use href="#table"/><rect x="215" y="20.500" width="34" height="15.500" fill="#30333e"/><path stroke="#83858c" stroke-width="1.200" d="M219 25.500h26M219 32h16"/><use href="#grid"/></svg>
  <svg x="823" y="1157" width="254" height="216.500"><rect class="bg" width="100%" height="100%"/><g opacity=".4"><use href="#nav"/><use href="#table"/></g><svg y="141" width="254" height="80"><rect class="bg" width="254" height="80"/><use href="#table" y="-141"/></svg><use href="#modal-sm" x="97" y="33"/><use href="#grid"/></svg>
  <svg x="525" y="1426" width="254" height="180"><rect class="bg" width="100%" height="100%"/><use href="#nav"/><use href="#table"/><rect x="55" y="20" width="27" height="23.500" fill="#30333e"/><path stroke="#83858c" stroke-width="1.200" d="M58 25h19M58 32h8M58 39h18"/><use href="#grid"/></svg>
  <svg x="823" y="1426" width="254" height="180"><rect class="bg" width="100%" height="100%"/><use href="#nav"/><use href="#table"/><path fill="#30333e" d="M203 33h37v18h-37zM169 42h33v15.500h-33z"/><path stroke="#83858c" stroke-width="1.200" d="M207 38.500h16M207 45.500h25M172 47h21M172 53h20"/><use href="#grid"/></svg>
  <svg x="1114" y="1426" width="254.300" height="180"><rect class="bg" width="100%" height="100%"/><use href="#nav"/><use href="#table"/><use href="#grid"/></svg>

  <!-- saved views -->
  <rect x="1630" y="862.600" width="41.600" height="30" fill="#2b2f39"/><path stroke="#7f8189" stroke-width="1.200" d="M1634 868.300h24M1634 881h25M1634 887.500h34"/><path stroke="#238047" stroke-width="1.200" d="M1634 874.500h28"/>
  <rect x="1690.600" y="850.500" width="59" height="143" fill="#171a21"/><path stroke="#c6c6ca" stroke-width="1.400" d="M1696 856h17"/><path stroke="#6d7078" stroke-width="1.200" d="M1698 869h22M1698 890.500h26M1698 901.500h32M1699 933h22M1699 938h32M1699 944h15M1715 987h9"/><path stroke="#247542" stroke-width="1.300" d="M1698 880h28"/><path stroke="#a5a6ac" stroke-width="1.400" d="M1738 869h2M1737 892l3-3M1737 903l3-3"/><rect x="1696" y="975" width="48" height="6.500" fill="#143a24"/><path stroke="#247542" stroke-width="1.200" d="M1716 978.300h7"/><path stroke="#fff1" d="M1696 874.500h48M1696 885h48M1696 896h48"/>

  <svg x="1923" y="825.500" width="254.300" height="193"><rect class="bg" width="100%" height="100%"/><g opacity=".5"><use href="#nav"/><use href="#dash"/><use href="#edit-actions"/><rect x="16" y="165" width="236" height="30" fill="#111317"/><use href="#tray" x="16" y="143.500"/></g><use href="#modal-sm" x="97" y="33"/><use href="#grid"/></svg>

  <svg x="1698.500" y="1028.700" width="238.500" height="83"><rect class="bg" width="100%" height="100%"/><use href="#tiles" x="5" y="4.500"/><use href="#tiles" x="5" y="28.500"/><use href="#tile" x="5" y="53"/><use href="#tile" x="30.600" y="53"/><use href="#tile" x="56.200" y="53"/><path fill="none" stroke="#ddd" stroke-width="1.200" d="M14 61a3 3 0 1 1 4 2M38 58h6M38 61h4M64 58h6v4h-6z"/><use href="#grid" x="-15"/></svg>

  <rect x="2068.300" y="1081" width="112.700" height="64.500" fill="#111317"/><rect x="2072" y="1092" width="53" height="25" fill="#191c22"/><path stroke="#b8b8bc" stroke-width="1.400" d="M2072 1086.500h18M2076 1097h15"/><path stroke="#63666e" stroke-width="1.200" d="M2076 1111h12M2102 1111h14M2162 1086.500h8M2176 1086.500h1"/><g class="num small"><text x="2076" y="1107">9</text><text x="2102" y="1107">3</text></g>

  <rect x="1696.800" y="1142" width="112.800" height="64" fill="#111317"/><path stroke="#cfcfd3" stroke-width="1.500" d="M1700.500 1147h38"/><path fill="#2b7f83" d="M1720 1168c10 0 12 3 19 3v9c-7 0-9-1.500-19-3z"/><path fill="#1e5684" d="M1720 1181c10 0 12 1.500 19 1.500v11.500c-7 0-9 1.500-19 1.500z"/><path fill="#a85e1c" d="M1739 1170.500h18.500v24H1739z"/><path stroke="#ef9b3a" stroke-width="1.200" d="M1739 1170.500v24M1757.500 1170.500v24"/><path stroke="#8f9197" stroke-width="1.400" d="M1702 1161h17M1707 1165h12M1699 1173h20M1702 1188.500h17M1731 1182h16M1759 1182h22M1750 1198h14M1775 1195h15M1775 1199h30"/>

  <path stroke="#dedede" d="M1677 1241.600h234"/>
  <g id="gauge"><rect x="1677.700" y="1246" width="54" height="40" fill="#111317"/><path stroke="#a5a6ac" stroke-width="1.300" d="M1682 1251h29"/><path fill="none" stroke="#2a2d37" stroke-width="6" d="M1691 1277.500a13.500 13.500 0 0 1 27 0"/><path stroke="#555" d="M1690 1280h5M1715 1280h5"/><path stroke="#ccc" stroke-width="1.800" d="M1701 1275.500h7"/></g>
  <use href="#gauge" x="59.300"/><use href="#gauge" x="119"/><use href="#gauge" x="178"/>
  <g fill="none" stroke-width="6"><path stroke="#3fb56d" d="M1750.300 1277.500a13.500 13.500 0 0 1 8-12.300"/><path stroke="#ec5f55" d="M1810 1277.500a13.500 13.500 0 0 1 27 0"/><path stroke="#f6e05c" d="M1869 1277.500a13.500 13.500 0 0 1 21-11.300"/></g>

  <path stroke="#d3d3d5" stroke-width=".8" d="M1640 1385h230M1640 1398.300h230M1640 1411.700h230M1640 1425h230M1640 1438.500h230"/>
  <path fill="#111317" d="M1793 1374h54v7h-54zM1849 1374h21v7h-21z"/><path stroke="#666" d="M1797 1377.500h45M1852 1377.500h14"/>
  <path fill="none" stroke="#7cc6e8" stroke-width="1.200" d="M1641 1438.500c4-6 5-6.500 8-6.800s5 .5 8-.5 4-6 8-6.200h16c4 0 5 7 8 6s5-26 8-26 5 20 7.500 20 5-27 8-27 5 20 8 21 5 12 8 13 5 6.500 8 6.500 4-27 7.500-27 5 14 8 13 5-33 8.500-33 4 40 7 40 5-19 8.500-19 5 13 8 13 5-34 8-34 4 26 7 33 6 14 8.500 14 4-26 8-27 5 7 8 7h16c4 0 5 13 8 13s5-7 8-6.500 5 13.500 8 13.500h3"/>
  <path stroke="#bbb" d="M1641 1441.500h14M1856 1441.500h13"/>

  <!-- weekly report frame -->
  <svg x="1932" y="1192.500" width="254.300" height="410"><rect class="bg" width="100%" height="100%"/><use href="#nav"/><use href="#crumbs"/>
    <path stroke="#d4d4d8" stroke-width="1.900" d="M18 18h29"/><path stroke="#b8711c" stroke-width="2.400" d="M50 18h13.500"/><path stroke="#97979d" stroke-width="1.300" d="M18 28h18M196 18h19M229 18h13"/>
    <path fill="#ffffff0d" d="M18 37h73.500v18H18zM97 37h74v18H97zM176 37h73v18h-73z"/><path fill="none" stroke="#97979d" d="M25.500 43.500h3v5h-3zM104 43.500h4v4h-4zM183 43h3.500v6H183z"/>
    <g class="num"><text x="36" y="45.500">5,864</text><text x="114" y="45.500">10</text><text x="193" y="45.500">3,869</text></g>
    <path stroke="#24604f" stroke-width="1.300" d="M52 43.500h6M207 43.500h7"/><path stroke="#696a71" stroke-width="1.200" d="M36 49.500h15M114 49.500h22M193 49.500h28M94 72h10M117 72h7M133 72h9M156 72h20"/>
    <path stroke="#a0a0a6" stroke-width="1.400" d="M22 65.500h48M22 155.500h54M140 155.500h31M22 223.500h41M140 223.500h38M18 293h25M22 307.500h18M80 307.500h14M140 307.500h17M199 307.500h10M22 337h46M140 337h43"/>
    <path stroke="#66666c" stroke-width="1.300" stroke-dasharray="14 13.700" d="M32 138h208"/>
    <path stroke="#ffffff0e" stroke-width=".6" d="M22 79h226M22 92h226M22 105h226M22 118h226M22 132h226M18 149h116M138 149h113"/>
    <g id="bars8"><path fill="#f7cf5e" d="M34 112h11.500v20.300H34zM61.500 125.700H73v6.600H61.500zM89 98.300h11.500v34H89zM116.500 125.700H128v6.600h-11.500zM172 125.700h11.500v6.600H172zM199 119h11.500v7H199zM227 119h11.500v7H227z"/><path fill="#f7963a" d="M89 125h11.500v7.300H89zM144 119h11.500v13.300H144zM199 126h11.500v6.300H199zM227 126h11.500v6.300H227z"/></g>
    <circle cx="50" cy="184.500" r="16" fill="none" stroke="#8f55e6" stroke-width="4.300"/><path fill="none" stroke="#f7963a" stroke-width="4.300" d="M45 199.700a16 16 0 0 1-8.500-24"/><circle cx="168.700" cy="184.500" r="16" fill="none" stroke="#f8d45c" stroke-width="4.300"/>
    <path stroke="#ddd" stroke-width="2" d="M49 183h2M167.500 183h2"/><path stroke="#666" stroke-width="1" d="M47.500 188h5M166 188h5"/>
    <path stroke="#66676e" stroke-width="1.200" d="M80 182h40M80 187.500h23M209 174.500h15M209 181h15M209 187.500h15M209 194h15M140 236.500h46M140 247h55M140 257.500h48M143 277.500h6M44 274h14M89 274h13M42 281h27M77 281h33"/>
    <path stroke="#e5554e" stroke-width="1.600" d="M206 174.500h2"/><path stroke="#f7963a" stroke-width="1.600" d="M206 181h2M77 187.500h2M73 281h2"/><path stroke="#f8d45c" stroke-width="1.600" d="M206 187.500h2"/><path stroke="#37b562" stroke-width="1.600" d="M206 194h2"/>
    <path stroke="#2a4658" stroke-width=".8" d="M51 252l44 17"/><path stroke="#5e4420" stroke-width=".8" d="M51 269l44-17"/><g fill="#2f9fe0"><circle cx="51" cy="252" r="1.300"/><circle cx="95" cy="269" r="1.300"/></g><g fill="#f7b23a"><circle cx="51" cy="269" r="1.300"/><circle cx="95" cy="252" r="1.300"/></g>
    <path stroke="#ffffff10" stroke-width=".6" d="M18 216h116M138 216h113M18 297h233M22 325h112M138 325h113"/>
    <g class="num"><text x="22" y="317">0</text><text x="48" y="317">0</text><text x="80" y="317">60</text><text x="107" y="317">3,470</text><text x="140" y="317">8,128</text><text x="199" y="317">15</text><text x="226" y="317">88</text></g>
    <path stroke="#5a5b64" stroke-width="1.100" d="M22 321.500h12M48 321.500h7M80 321.500h12M107 321.500h7M140 321.500h12M199 321.500h12M226 321.500h6"/>
    <path stroke="#66676e" stroke-width="1.200" d="M22 350h41M22 360.500h36M22 371.500h41M22 382h40M22 392.500h26M140 350h54M140 360.500h46M140 371.500h72M140 382h35M140 392.500h46"/><path stroke="#b8b8bc" stroke-width="4" stroke-dasharray="1.500 9.250" d="M125.500 349.200v46"/><path stroke="#a0a0a6" stroke-width="2.500" stroke-dasharray="1.500 9.250" d="M244 349.200v46M244 236v24"/>
    <use href="#grid"/></svg>

  <!-- new graphs frame -->
  <svg x="2248.700" y="739.500" width="190" height="870"><rect class="bg" width="100%" height="100%"/><use href="#nav"/><use href="#crumbs"/>
    <path stroke="#d4d4d8" stroke-width="1.700" d="M18 17h62"/><path stroke="#b8711c" stroke-width="2" d="M83 17h12.500"/>
    <path stroke="#a0a0a6" stroke-width="1.300" d="M21 31h42M139.500 31h40M21 144h42M21 257.500h55M139.500 257.500h40M139.500 260.500h8M21 381h55M21 458h50M21 562.500h42M21 565.500h9M100.500 562.500h50M21 677h49M21 775h38M21 778h9M100.500 775h38"/>
    <path stroke="#5f6067" stroke-width="1.100" d="M25 43h6M92 43h30M25 52h29M25 61.500h61M25 70.500h30M25 78h69M25 81h12M25 89h72M25 98h54M25 107h48M25 116h43M25 126h7M25 155h6M25 165h30M25 174h61M25 183h37M25 192h80M25 201h72M25 210.500h54M25 219.500h48M25 228.500h43M25 239h7M143 43h6M143 52h29M143 64h30M143 67h28M143 79h30M143 82h13M143 126h7"/>
    <path stroke="#97979c" stroke-width="7" stroke-dasharray="1.200 7.950" d="M121 51.500v66"/><path stroke="#97979c" stroke-width="2.500" stroke-dasharray="1.200 7.950" d="M106 51.500v66"/><path stroke="#ccc" stroke-width="1.300" d="M105 126h3M117 126h7"/><path stroke="#646c78" stroke-width="2" d="M111 31h9M111 257.500h9M71 562.500h9M71 775h9M148 775h11"/>
    <path fill="#ffffff0a" d="M21 37h108v10H21zM21 150h160v8H21z"/>
    <use href="#donut-lg" x="74.300" y="294.500"/><use href="#donut-lg" x="173" y="294.500"/><use href="#donut-lg" x="74.300" y="413.500"/>
    <path stroke="#6a5058" stroke-width="1.200" d="M34 325h28M34 330h30M34 334.500h48M34 339.500h28M34 344.500h29M94 325h22M94 330h18M94 334.500h22M94 339.500h12M152 325h30M152 330h30M152 334.500h38M152 339.500h26M152 344.500h30M152 349h26M152 354h22M131 405.500h28M131 410.500h30M131 415h50M131 420h28M131 425h30"/>
    <path stroke="#f7963a" stroke-width="1.600" d="M31 325h2M149 325h2M128 405.500h2"/><path stroke="#d25581" stroke-width="1.600" d="M31 334.500h2M31 339.500h2M149 339.500h2M128 415h2M128 420h2"/>
    <path fill="#dc4a52" d="M25 479h10l4 5.500h34l5 6h25l4 5.500h36l5 6h39v21H25z"/><path fill="#f29060" d="M25 480.500h9l4 5.500h28l5 6h26l5 6h20l6 5h21l6 5.500h34v16H25z"/><path fill="#c4a25a" d="M25 511c40 1 80 4 165 7v6H25z"/><path fill="#4f8f3a" d="M25 518.500l60 1.500 105 1.500v3H25z"/>
    <path stroke="#66666c" stroke-width="1.200" stroke-dasharray="14 13.800" d="M33 530h157"/><path stroke="#5d584f" stroke-width="1.200" stroke-dasharray="22 12" d="M41 538.500h150M97 545.500h80"/>
    <path fill="#dc4a52" d="M25 582.500h2l2 6.500h9l3 5.500h8l2 6h8l3 5.500h8l2 6h5l3 5.500h8l1 12.500H25z"/><path fill="#f29060" d="M25 585l2 5.500h9l3 5.500h8l3 6h7l3 6h7l3 6h5l3 6 9 6v4H25z"/><path fill="#c4a25a" d="M25 616l25 3 32 7v4H25z"/><path fill="#4f8f3a" d="M25 624l62 4.500v1.500H25z"/>
    <path fill="#dc4a52" d="M104 582.500l5 5.500h14l4 6h12l4 6h14l4 6h16l4 6h10v17h-87z"/><path fill="#f29060" d="M104 584.500l4 5.500h14l4 6h12l4 6h13l4 6h12l5 6h5l4 5h6v11h-87z"/><path fill="#c4a25a" d="M104 616l30 3 56 4v7h-86z"/><path fill="#4f8f3a" d="M104 624l86 2.500v3h-86z"/>
    <path stroke="#66666c" stroke-width="1.200" stroke-dasharray="14 10.500" d="M25 635h64M104 635h80"/><path stroke="#5d584f" stroke-width="1.200" stroke-dasharray="28 7" d="M25 643h63M30 649h50M25 655h63M27 660h58M110 643h75M108 649h80M125 655h60"/>
    <use href="#bars8" x="0" y="612"/><path stroke="#66666c" stroke-width="1.200" stroke-dasharray="14 13.700" d="M32 750h150"/><path stroke="#6a5058" stroke-width="1.200" stroke-dasharray="10 9" d="M93 758.500h96"/>
    <path fill="#f7cf5e" d="M25 823.500h5v20h-5zM33 836h5v7.500h-5zM41.500 805h5v38.500h-5zM49.500 836h5v7.500h-5zM66 836h5v7.500h-5zM74 829h5v14.500h-5zM82 829h5v14.500h-5z"/><path fill="#f7963a" d="M57.500 829.500h5v14h-5zM41.500 838h5v5.500h-5zM74 837h5v6.500h-5zM82 837h5v6.500h-5z"/>
    <path fill="none" stroke="#b59c44" stroke-width="1.500" d="M105 843v-20M107.500 843v-12M110 843v-28M112.500 843v-18M115.500 843v-20M118.500 843v-28M121 843v-14M123.500 843v-18M126 843v-18M129 843v-6M131 843v-28M134 843v-20M137 843v-14M140 843v-27M143 843v-18M146 843v-8M148.500 843v-28M151 843v-20M154 843v-15M157 843v-18M159 843v-10M162 843v-28M164.500 843v-12M166.500 843v-20"/>
    <path stroke="#66666c" stroke-width="1.200" stroke-dasharray="14 10.500" d="M25 849h64M104 849h64"/>
    <use href="#grid"/></svg>

  <!-- frame labels -->
  <g class="label">
    <text x="803.500" y="109">Reports - New Report</text><text x="1092" y="109.500">Reports - New Report - C...</text><text x="1362" y="173">Reports - Edit</text>
    <text x="524.500" y="407.500">Reports - Details - Charts</text><text x="803.500" y="407.500">Reports - New Report</text><text x="1083" y="407.500">Reports - Details - Charts</text><text x="1362" y="407.500">Reports - Details - Charts...</text><text x="1637.500" y="407.500">Reports - Details - Charts</text><text x="1922.500" y="407.500">Reports - Edit</text><text x="2222.500" y="407.500">Reports - Edit</text>
    <text x="803.500" y="574">Reports - New Report</text><text x="2248.500" y="728.500">New Graphs</text>
    <text x="939" y="749.500">A...</text><text x="1630" y="852">A...</text>
    <text x="524.500" y="840">Reports - Table - Investig...</text><text x="822.500" y="840">Reports - Table - Save As</text><text x="1098" y="840">Reports - Table - Configu...</text><text x="1362" y="840">Reports - Table - Save As</text><text x="1922.500" y="815">Reports - Edit - Rename</text>
    <text x="1698.500" y="1018">Reports - Edit - Icons</text><text x="524.500" y="1146.500">Reports - Table - Save As</text><text x="822.500" y="1146.500">Reports - Table - Rename</text><text x="1931.500" y="1182">Reports - Edit</text>
    <text x="524.500" y="1415.500">Reports - Table - Settings</text><text x="822.500" y="1415.500">Reports - Table - Export</text><text x="1113.500" y="1415.500">Reports - Table - Export</text>
  </g>
  <rect x="495" y="1535" width="1935" height="63" fill="url(#fade)"/>
  <rect class="scroll" x="2414" y="682" width="9" height="470" rx="4.500"/>
</svg>

<div class="toolbar">
  <span class="tool active"><svg class="ic" width="30" height="30"><use href="#i-move"/></svg></span><svg class="ic chev" width="9" height="6"><use href="#i-chev"/></svg>
  <span class="tool"><svg class="ic" width="28" height="28"><use href="#i-frame"/></svg></span><svg class="ic chev" width="9" height="6"><use href="#i-chev"/></svg>
  <span class="tool"><svg class="ic" width="28" height="28"><use href="#i-rect"/></svg></span><svg class="ic chev" width="9" height="6"><use href="#i-chev"/></svg>
  <span class="tool"><svg class="ic" width="30" height="31"><use href="#i-pen"/></svg></span><svg class="ic chev" width="9" height="6"><use href="#i-chev"/></svg>
  <span class="tool"><svg class="ic" width="28" height="28"><use href="#i-text"/></svg></span>
  <span class="tool bubble"><svg class="ic" width="28" height="28"><use href="#i-bubble"/></svg></span><svg class="ic chev" width="9" height="6"><use href="#i-chev"/></svg>
  <span class="tool"><svg class="ic" width="30" height="30"><use href="#i-spark"/></svg></span>
  <span class="divider"></span>
  <span class="modes">
    <span class="mode"><svg class="ic" width="24" height="24"><use href="#i-draw"/></svg></span>
    <span class="mode on"><svg class="ic" width="24" height="24"><use href="#i-design"/></svg></span>
    <span class="mode"><svg class="ic" width="24" height="20"><use href="#i-code"/></svg></span>
  </span>
</div>
</main>

<aside class="right">
  <header class="share-head">
    <div class="share-row"><span class="avatar">M</span><svg class="ic chev" width="10" height="6"><use href="#i-chev"/></svg>
      <svg class="ic play" width="22" height="24"><use href="#i-play"/></svg><svg class="ic chev play-chev" width="10" height="6"><use href="#i-chev"/></svg><span class="share">Share</span></div>
    <div class="mode-row"><span class="pill">Design</span><span class="muted">Prototype</span><span class="zoom end">10%</span><svg class="ic chev" width="10" height="6"><use href="#i-chev"/></svg></div>
  </header>
  <section class="type-row"><h3>Section</h3><svg class="ic chev" width="10" height="6"><use href="#i-chev"/></svg><svg class="ic end" width="24" height="20"><use href="#i-code"/></svg><svg class="ic" width="22" height="22"><use href="#i-import"/></svg></section>
  <section class="prop position">
    <div class="prop-head"><h2>Position</h2></div>
    <div class="fields">
      <span class="seg"><i><svg class="ic" width="24" height="24"><use href="#i-al"/></svg></i><i><svg class="ic" width="24" height="24"><use href="#i-ac"/></svg></i><i><svg class="ic" width="24" height="24"><use href="#i-ar"/></svg></i></span>
      <span class="seg"><i><svg class="ic" width="24" height="24"><use href="#i-at"/></svg></i><i><svg class="ic" width="24" height="24"><use href="#i-am"/></svg></i><i><svg class="ic" width="24" height="24"><use href="#i-ab"/></svg></i></span>
      <svg class="ic end" width="24" height="24"><use href="#i-tidy"/></svg>
    </div>
    <div class="fields second"><span class="field"><b>X</b>22281</span><span class="field"><b>Y</b>3583</span></div>
  </section>
  <section class="prop layout">
    <div class="prop-head"><h2>Layout</h2><svg class="ic end dark" width="22" height="22"><use href="#i-shrink"/></svg></div>
    <div class="fields"><span class="field"><b>W</b>13874</span><span class="field"><b>H</b>15702</span><svg class="ic end" width="22" height="22"><use href="#i-resize"/></svg></div>
  </section>
  <section class="prop appearance">
    <div class="prop-head"><h2>Appearance</h2><svg class="ic end" width="25" height="18"><use href="#i-eye"/></svg><svg class="ic" width="20" height="24"><use href="#i-drop"/></svg></div>
    <div class="fields"><span class="field glyph"><svg class="ic grey" width="22" height="22"><use href="#i-opacity"/></svg>100%</span><span class="field glyph"><svg class="ic grey" width="22" height="22"><use href="#i-corners"/></svg>2</span><svg class="ic end dark" width="22" height="22"><use href="#i-corners"/></svg></div>
  </section>
  <section class="prop fill">
    <div class="prop-head"><h2>Fill</h2><svg class="ic end" width="22" height="22"><use href="#i-styles"/></svg><svg class="ic" width="22" height="22"><use href="#i-plus"/></svg></div>
    <div class="fields"><span class="paint"><span class="hex"><em class="swatch white"></em>FFFFFF</span><span class="pct">100<b>%</b></span></span><svg class="ic eye" width="25" height="18"><use href="#i-eye"/></svg><svg class="ic end minus" width="22" height="22"><use href="#i-minus"/></svg></div>
  </section>
  <section class="prop stroke">
    <div class="prop-head"><h2>Stroke</h2><svg class="ic end" width="22" height="22"><use href="#i-styles"/></svg><svg class="ic" width="22" height="22"><use href="#i-plus"/></svg></div>
    <div class="fields"><span class="paint"><span class="hex"><em class="swatch black"></em>000000</span><span class="pct">10<b>%</b></span></span><svg class="ic eye" width="25" height="18"><use href="#i-eye"/></svg><svg class="ic end minus" width="22" height="22"><use href="#i-minus"/></svg></div>
    <div class="fields second"><span class="select">Inside<svg class="ic chev end" width="10" height="6"><use href="#i-chev"/></svg></span><span class="field weight"><svg class="ic grey" width="22" height="22"><use href="#i-weight"/></svg>1</span><svg class="ic sliders" width="22" height="22"><use href="#i-sliders"/></svg></div>
  </section>
  <section class="prop selection">
    <div class="prop-head"><h2>Selection colors</h2></div>
    <div class="fields"><span class="outline-btn">Show selection colors</span></div>
  </section>
  <section class="prop export"><div class="prop-head"><h2>Export</h2><svg class="ic end grey" width="22" height="22"><use href="#i-plus"/></svg></div></section>
  <span class="help">?</span>
</aside>
</body>
</html>
```
FILE: styles.css
```css
* { box-sizing: border-box; }
body {
  margin: 0;
  display: flex;
  width: 2840px;
  height: 1598px;
  overflow: hidden;
  background: #fff;
  color: #1c1c1c;
  font: 420 18.800px/1.3 Inter, "Liberation Sans", sans-serif;
  letter-spacing: 0;
}
h1, h2, h3 { margin: 0; font-size: inherit; font-weight: 590; }
h1, h2, h3, .sub-row span, .dev-row span:not(.dev-badge), .muted, .zoom { padding-top: 2px; }
.sprite { position: absolute; width: 0; height: 0; }
.ic { flex: none; fill: none; stroke: #1f1f1f; stroke-width: 1.7; stroke-linejoin: round; overflow: visible; }
.chev { stroke-linecap: round; stroke-width: 1.8; }
.grey { stroke: #8a8a8a; }
.dark { stroke-width: 2.2; }
.end { margin-left: auto; }
.muted { color: #8c8c8c; }
.faint { stroke: #b3b3b3; }
.thick { stroke: #111; stroke-width: 3; stroke-linecap: round; }
.pill { display: flex; align-items: center; height: 40px; padding-top: 2px; border-radius: 8px; background: #f4f4f4; font-weight: 590; }

/* left panel */
.left { flex: none; width: 496px; border-right: 2px solid #e7e7e7; }
.row { display: flex; align-items: center; height: 40px; }
.file-head { height: 222px; padding: 19px 27px 0 22px; border-bottom: 1px solid #e4e4e4; }
.app-row { padding-left: 4px; gap: 13px; }
.title-row { margin-top: 15px; padding-left: 1px; gap: 28px; }
h1 { font-size: 22.200px; }
.sub-row { height: 30px; margin-top: 3px; color: #8c8c8c; }
.dev-row { margin-top: 20px; gap: 14px; }
.dev-badge { display: flex; align-items: center; justify-content: center; width: 27px; height: 27px; border-radius: 5px; background: #3fa95c; }
.dev-badge .ic { stroke: #fff; stroke-width: 2.2; }
.count { margin-right: 4px; color: #8c8c8c; font-size: 17px; }
.tabs { display: flex; align-items: center; height: 70px; padding: 0 21px 0 8px; border-bottom: 1px solid #e4e4e4; }
.tabs .pill { width: 60px; padding-left: 14px; margin-right: 21px; }
.list-head { display: flex; align-items: center; height: 70px; padding: 0 23px 0 22px; }
.pages { height: 247px; border-bottom: 1px solid #e4e4e4; }
.page, .layer { display: flex; align-items: center; height: 40px; margin: 7.400px 14px 7.400px 8px; padding: 0 9px 0 13.500px; border-radius: 8px; }
.page span, .layer span { padding-top: 1px; }
.page + .page, .layer + .layer { margin-top: 14.780px; }
.page .ic { stroke: #2f9e54; stroke-width: 2; }
.page.current { background: #f4f4f4; font-weight: 590; }
.layer { margin-left: 15px; padding-left: 12px; gap: 17.500px; }
.layer.selected { background: #e5f3ff; font-weight: 590; }

/* canvas */
.canvas { position: relative; flex: none; width: 1934px; height: 1598px; overflow: hidden; margin-left: -1px; }
.board { display: block; }
.bg { fill: #111317; }
.gridcols { fill: none; stroke: #f00; stroke-opacity: .1; stroke-width: 2000; stroke-dasharray: 14 5.85; }
.label { fill: #0a7be6; font-size: 18.900px; font-weight: 400; letter-spacing: .05px; }
.label.purple { fill: #7b35dd; }
.dots { stroke: #0a7be6; }
.dots.purple { stroke: #6a2be0; }
.num { fill: #d2d2d6; font-size: 4.600px; font-weight: 700; letter-spacing: 0; }
.num.small { font-size: 4px; }
.scroll { fill: rgba(0, 0, 0, .45); stroke: rgba(255, 255, 255, .55); stroke-width: 1.3; }

.toolbar { position: absolute; left: 511px; top: 1516px; display: flex; align-items: center; width: 825px; height: 84px; padding-left: 13px; border-radius: 22px; background: linear-gradient(#fff 45%, #f5f5f5); box-shadow: 0 0 1px rgba(0, 0, 0, .35), 0 4px 14px rgba(0, 0, 0, .14); }
.tool { flex: none; display: flex; align-items: center; justify-content: center; width: 55px; height: 55px; border-radius: 8px; }
.tool.active { background: #2f98f9; }
.toolbar .ic { stroke-width: 1.9; }
.toolbar .active .ic { stroke: #fff; }
.toolbar > .chev { margin: 0 22.500px 0 11px; }
.tool.bubble { margin-left: 13px; }
.divider { flex: none; width: 1.500px; height: 84px; margin: 0 14px; background: #e2e2e2; }
.modes { flex: none; display: flex; align-items: center; justify-content: space-between; width: 157px; height: 55px; padding: 0 3px; border-radius: 8px; background: #f1f1f1; }
.mode { display: flex; align-items: center; justify-content: center; width: 47px; height: 48px; border-radius: 7px; }
.toolbar .mode .ic { stroke: #8a8a8a; }
.mode.on { background: #fff; box-shadow: 0 1px 3px rgba(0, 0, 0, .2); }
.toolbar .mode.on .ic { stroke: #1b86ee; }

/* right panel */
.right { position: relative; flex: 1; height: 1598px; border-left: 2px solid #e7e7e7; background: #fff; }
.share-head { height: 136px; padding-top: 12px; border-bottom: 1px solid #e4e4e4; }
.share-row { display: flex; align-items: center; height: 55px; padding: 0 12px 0 20px; }
.avatar { display: flex; align-items: center; justify-content: center; width: 42px; height: 42px; margin-right: 9px; border-radius: 50%; background: #e9542c; color: #fff; }
.play { margin-left: auto; }
.play-chev { margin: 0 16px 0 24px; }
.share { display: flex; align-items: center; justify-content: center; width: 93px; height: 55px; padding-top: 1px; border-radius: 9px; background: #2f98f9; color: #fff; font-weight: 500; }
.mode-row { display: flex; align-items: center; height: 40px; margin-top: 14px; padding: 0 24px 0 14px; }
.mode-row .pill { width: 90px; padding-left: 13px; margin-right: 22px; }
.zoom { margin-right: 27px; }
.type-row { display: flex; align-items: center; height: 85px; padding: 0 22px 0 29px; border-bottom: 1px solid #e4e4e4; }
.type-row h3 { margin-right: 17px; font-size: 22.200px; font-weight: 500; }
.type-row .end { margin-right: 25px; }
.prop { padding: 0 22px 0 28px; border-bottom: 1px solid #e4e4e4; }
.prop-head { display: flex; align-items: center; height: 70px; margin-bottom: 5px; gap: 26px; }
.fields { display: flex; align-items: center; gap: 14.500px; height: 41px; }
.second { margin-top: 14px; }
.position { height: 200px; }
.layout { height: 146px; }
.appearance { height: 145px; }
.fill { height: 149px; }
.stroke { height: 204px; }
.selection { height: 145px; }
.export { height: 70px; color: #8c8c8c; }
.export h2 { font-weight: 450; }
.fill .prop-head, .stroke .prop-head { margin-bottom: 8px; }
.seg { display: flex; gap: 2px; width: 150px; height: 41px; border-radius: 8px; overflow: hidden; }
.seg i { display: flex; flex: 1; align-items: center; justify-content: center; background: #f4f4f4; }
.field { display: flex; align-items: center; width: 150px; height: 41px; padding: 1px 0 0 11px; border-radius: 8px; background: #f4f4f4; }
.field b { width: 19px; margin-right: 11px; text-align: center; }
b { color: #8c8c8c; font-weight: 400; }
.glyph { gap: 9px; }
.paint { display: flex; gap: 2px; width: 265px; height: 40px; border-radius: 8px; overflow: hidden; }
.paint > span { display: flex; align-items: center; background: #f4f4f4; }
.hex { width: 171px; padding-left: 9px; gap: 11px; }
.pct { flex: 1; padding: 0 12px 0 13px; justify-content: space-between; }
.pct b { font-size: 17px; }
.swatch { width: 24px; height: 24px; border-radius: 4px; border: 1px solid #e2e2e2; background: #fff; }
.swatch.black { border: 0; background: linear-gradient(90deg, #000 50%, transparent 50%), repeating-conic-gradient(#ccc 0 25%, #f1f1f1 0 50%) 0 0 / 8px 8px; }
.eye { margin-left: 6.500px; }
.minus { margin-right: 2px; }
.select { display: flex; align-items: center; width: 129px; height: 40px; padding: 1px 15px 0 14px; border: 1.500px solid #e2e2e2; border-radius: 8px; }
.weight { width: 123px; padding-left: 9px; gap: 10px; }
.stroke .second { margin-top: 15px; }
.sliders { margin-left: 9px; }
.outline-btn { display: flex; align-items: center; justify-content: center; width: 225px; height: 41px; padding-top: 1px; border: 1.500px solid #e2e2e2; border-radius: 8px; }
.help { position: absolute; left: 314px; top: 1523px; display: flex; align-items: center; justify-content: center; width: 55px; height: 55px; border-radius: 50%; background: #1e1e1e; color: #fff; font-size: 27px; }
```
